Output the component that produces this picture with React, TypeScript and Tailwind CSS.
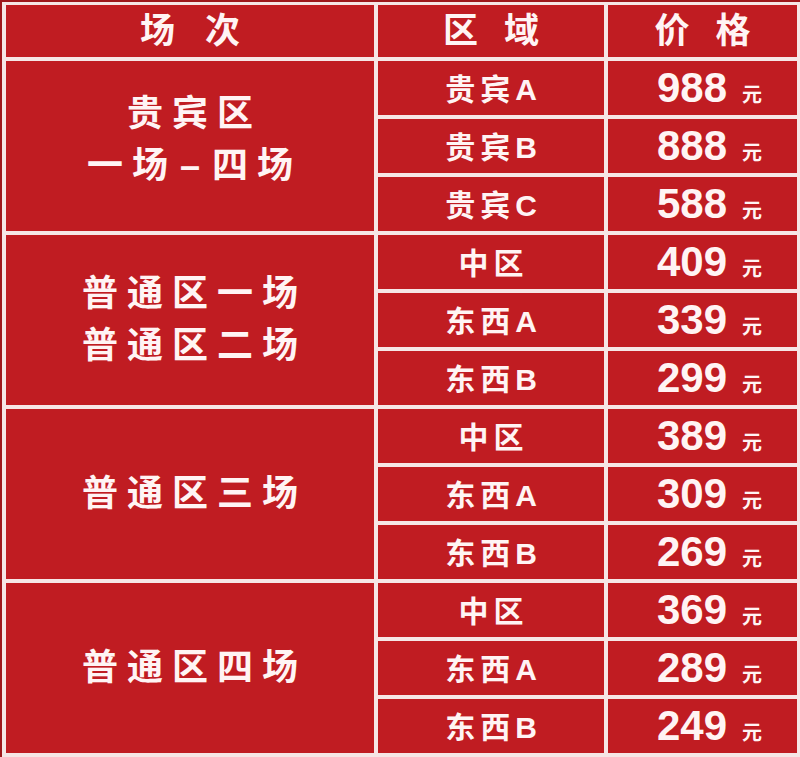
const sessions = [
  {
    lines: ['贵宾区', '一场–四场'],
    raise: true,
    zones: [
      { name: '贵宾A', price: 988 },
      { name: '贵宾B', price: 888 },
      { name: '贵宾C', price: 588 },
    ],
  },
  {
    lines: ['普通区一场', '普通区二场'],
    zones: [
      { name: '中区', price: 409 },
      { name: '东西A', price: 339 },
      { name: '东西B', price: 299 },
    ],
  },
  {
    lines: ['普通区三场'],
    zones: [
      { name: '中区', price: 389 },
      { name: '东西A', price: 309 },
      { name: '东西B', price: 269 },
    ],
  },
  {
    lines: ['普通区四场'],
    zones: [
      { name: '中区', price: 369 },
      { name: '东西A', price: 289 },
      { name: '东西B', price: 249 },
    ],
  },
];

const rowSpans = ['row-span-3 row-start-2', 'row-span-3 row-start-5', 'row-span-3 row-start-8', 'row-span-3 row-start-11'];

function SessionLine({ text }: { text: string }) {
  // the dash in "一场–四场" is set a little apart from its neighbours
  if (text.includes('–')) {
    const [a, b] = text.split('–');
    return (
      <div>
        {a}
        <span className="mx-[3px]">–</span>
        {b}
      </div>
    );
  }
  return <div>{text}</div>;
}

export default function App() {
  return (
    <div
      className="w-[800px] h-[757px] bg-[#f6e6e6] border-t-2 border-l-2 border-[#9e171c] pt-[3px] pl-[4px] pr-[3px] pb-[4px] text-[#fff4f4] font-bold"
      style={{ fontFamily: '"Liberation Sans", "Noto Sans CJK SC", sans-serif' }}
    >
      <div className="grid grid-cols-[368px_226px_189px] grid-rows-[52px_repeat(12,54px)] gap-[4px]">
        {/* Header */}
        <div className="bg-[#c01c22] flex items-center justify-center text-[35px] tracking-[30px] pl-[30px]">
          场次
        </div>
        <div className="bg-[#c01c22] flex items-center justify-center text-[35px] tracking-[26px] pl-[26px]">
          区域
        </div>
        <div className="bg-[#c01c22] flex items-center justify-center text-[35px] tracking-[26px] pl-[26px]">
          价格
        </div>

        {sessions.map((s, i) => (
          <div
            key={i}
            className={`${rowSpans[i]} col-start-1 bg-[#c01c22] flex flex-col items-center justify-center text-[36px] leading-[52px] tracking-[9px] pl-[9px] ${
              s.raise ? 'pb-[12px]' : ''
            }`}
          >
            {s.lines.map((l) => (
              <SessionLine key={l} text={l} />
            ))}
          </div>
        ))}

        {sessions.flatMap((s) =>
          s.zones.map((z) => [
            <div
              key={z.name + z.price + 'n'}
              className="col-start-2 bg-[#c01c22] flex items-center justify-center text-[30px] tracking-[5px] pl-[5px] pt-[3px]"
            >
              {z.name}
            </div>,
            <div
              key={z.name + z.price + 'p'}
              className="col-start-3 bg-[#c01c22] flex items-baseline justify-center pl-[14px] pt-[6px]"
            >
              <span className="text-[42px] leading-none">{z.price}</span>
              <span className="text-[20px] ml-[15px] leading-none">元</span>
            </div>,
          ])
        )}
      </div>
    </div>
  );
}
